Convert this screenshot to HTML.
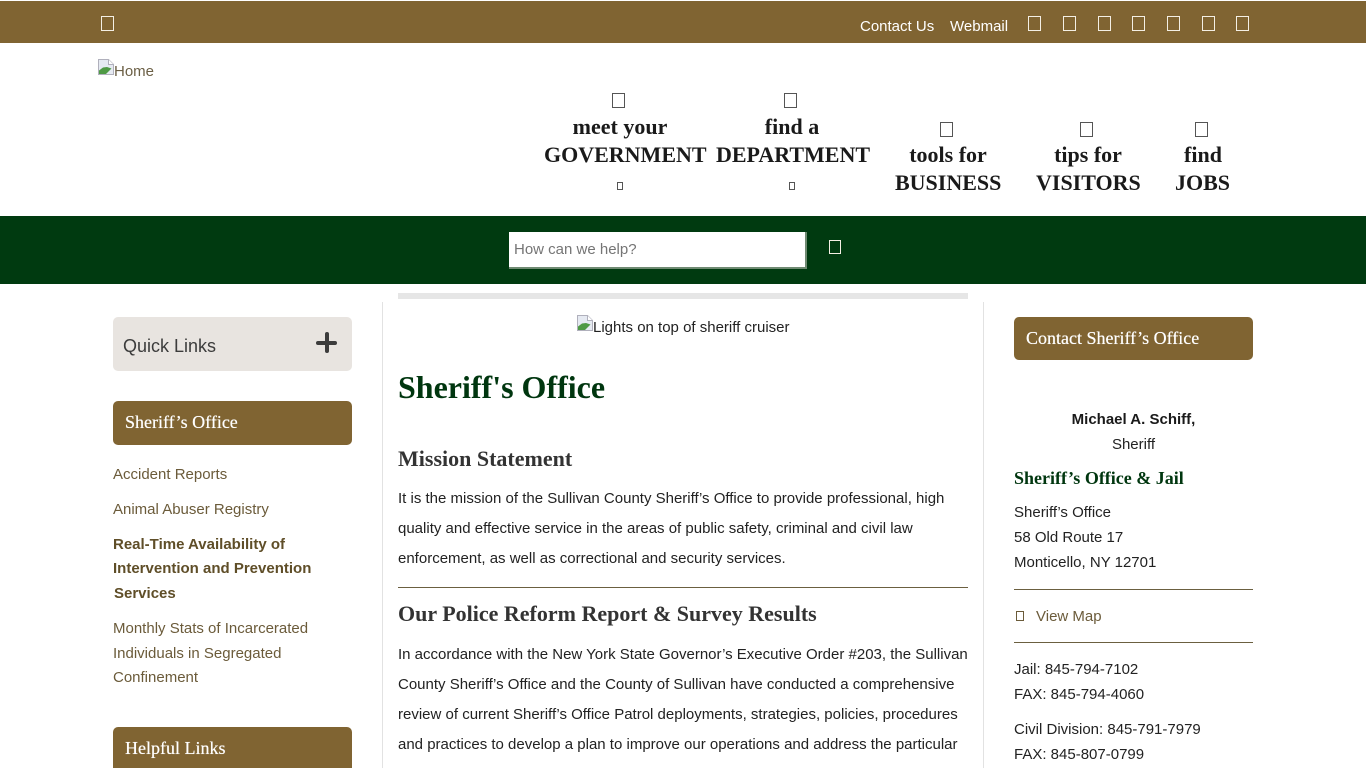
<!DOCTYPE html>
<html lang="en">
<head>
<meta charset="utf-8">
<title>Sheriff's Office</title>
<style>
html,body{margin:0;padding:0;width:1366px;height:768px;overflow:hidden;background:#fff;}
body{position:relative;font-family:"Liberation Sans",sans-serif;font-size:15px;color:#222;}
.t{position:absolute;white-space:nowrap;line-height:24px;height:24px;}
.a{position:absolute;}
.tofu{position:absolute;box-sizing:border-box;border:1px solid #f4efe4;width:13px;height:15px;}
.d{border-color:#555;}
.nav{font-family:"Liberation Serif",serif;font-weight:bold;font-size:22px;color:#1a1a1a;text-align:center;line-height:28px;height:28px;}
.bar{position:absolute;background:#806432;border-radius:5px;}
.bt{font-family:"Liberation Serif",serif;font-size:18px;color:#fff;text-shadow:0 0 .5px #fff;}
.l{color:#6b5b3a;}
.b{font-family:"Liberation Serif",serif;font-weight:bold;font-size:22px;color:#333;}
.hr{position:absolute;height:1px;background:#6b6040;}
</style>
</head>
<body>
<div class="a" style="left:0;top:1px;width:1366px;height:42px;background:#806432;"></div>
<div class="tofu" style="left:101px;top:16px;"></div>
<div class="t" style="left:860px;top:15px;color:#fff;font-size:15px;">Contact Us</div>
<div class="t" style="left:950px;top:15px;color:#fff;font-size:15px;">Webmail</div>
<div class="tofu" style="left:1028px;top:16px;"></div>
<div class="tofu" style="left:1063px;top:16px;"></div>
<div class="tofu" style="left:1098px;top:16px;"></div>
<div class="tofu" style="left:1132px;top:16px;"></div>
<div class="tofu" style="left:1167px;top:16px;"></div>
<div class="tofu" style="left:1202px;top:16px;"></div>
<div class="tofu" style="left:1236px;top:16px;"></div>

<svg class="a" style="left:98px;top:59px;" width="16" height="16" viewBox="0 0 16 16"><path d="M.5.5H10.500L15.500 5.500V15.500H.5Z" fill="#e6eaf2" stroke="#b0b0bc"/><path d="M1 15V11.500L5 8.500L9 8L13.500 9.500L8 15Z" fill="#4f9a45"/><path d="M10.500 .5V5.500H15.500" fill="#fff" stroke="#b0b0bc"/></svg>
<div class="t l" style="left:114px;top:60px;font-size:15px;color:#6b5f45;">Home</div>

<div class="tofu d" style="left:612px;top:93px;"></div>
<div class="tofu d" style="left:784px;top:93px;"></div>
<div class="tofu d" style="left:940px;top:122px;"></div>
<div class="tofu d" style="left:1080px;top:122px;"></div>
<div class="tofu d" style="left:1195px;top:122px;"></div>
<div class="tofu d" style="left:617px;top:182px;width:6px;height:8px;"></div>
<div class="tofu d" style="left:789px;top:182px;width:6px;height:8px;"></div>
<div class="t nav" style="left:540px;width:160px;top:113px;">meet your</div>
<div class="t nav" style="left:544px;top:141px;">GOVERNMENT</div>
<div class="t nav" style="left:712px;width:160px;top:113px;">find a</div>
<div class="t nav" style="left:716px;top:141px;">DEPARTMENT</div>
<div class="t nav" style="left:868px;width:160px;top:141px;">tools for</div>
<div class="t nav" style="left:895px;top:169px;">BUSINESS</div>
<div class="t nav" style="left:1008px;width:160px;top:141px;">tips for</div>
<div class="t nav" style="left:1036px;top:169px;">VISITORS</div>
<div class="t nav" style="left:1123px;width:160px;top:141px;">find</div>
<div class="t nav" style="left:1175px;top:169px;">JOBS</div>

<div class="a" style="left:0;top:216px;width:1366px;height:68px;background:#003a10;"></div>
<div class="a" style="left:509px;top:232px;width:298px;height:37px;box-sizing:border-box;background:#fff;border-right:2px solid #6f8a72;border-bottom:2px solid #6f8a72;"></div>
<div class="t" style="left:514px;top:238px;color:#757575;font-size:15px;">How can we help?</div>
<div class="tofu" style="left:829px;top:240px;width:12px;height:14px;"></div>

<div class="a" style="left:398px;top:293px;width:570px;height:6px;background:#e6e6e6;"></div>
<div class="a" style="left:382px;top:302px;width:1px;height:466px;background:#e2e2e2;"></div>
<div class="a" style="left:983px;top:302px;width:1px;height:466px;background:#e2e2e2;"></div>

<svg class="a" style="left:577px;top:315px;" width="16" height="16" viewBox="0 0 16 16"><path d="M.5.5H10.500L15.500 5.500V15.500H.5Z" fill="#e6eaf2" stroke="#b0b0bc"/><path d="M1 15V11.500L5 8.500L9 8L13.500 9.500L8 15Z" fill="#4f9a45"/><path d="M10.500 .5V5.500H15.500" fill="#fff" stroke="#b0b0bc"/></svg>
<div class="t" style="left:593px;top:316px;font-size:15px;color:#222;">Lights on top of sheriff cruiser</div>

<div class="a" style="left:113px;top:317px;width:239px;height:54px;background:#e8e4e0;border-radius:5px;"></div>
<div class="t" style="left:123px;top:334px;font-size:18px;color:#3c3c3c;">Quick Links</div>
<div class="a" style="left:316px;top:341px;width:21px;height:4px;background:#3c3c3c;border-radius:2px;"></div>
<div class="a" style="left:325px;top:332px;width:4px;height:21px;background:#3c3c3c;border-radius:2px;"></div>

<div class="bar" style="left:113px;top:401px;width:239px;height:44px;"></div>
<div class="t bt" style="left:125px;top:410px;">Sheriff’s Office</div>
<div class="t l" style="left:113px;top:463px;">Accident Reports</div>
<div class="t l" style="left:113px;top:498px;">Animal Abuser Registry</div>
<div class="t" style="left:113px;top:533px;font-weight:bold;color:#5f4e28;">Real-Time Availability of</div>
<div class="t" style="left:113px;top:557px;font-weight:bold;color:#5f4e28;">Intervention and Prevention</div>
<div class="t" style="left:114px;top:582px;font-weight:bold;color:#5f4e28;">Services</div>
<div class="t l" style="left:113px;top:617px;">Monthly Stats of Incarcerated</div>
<div class="t l" style="left:113px;top:642px;">Individuals in Segregated</div>
<div class="t l" style="left:113px;top:666px;">Confinement</div>
<div class="bar" style="left:113px;top:727px;width:239px;height:60px;"></div>
<div class="t bt" style="left:125px;top:736px;">Helpful Links</div>

<div class="t" style="left:398px;top:367px;height:40px;line-height:40px;font-family:'Liberation Serif',serif;font-weight:bold;font-size:32px;color:#00360f;">Sheriff's Office</div>
<div class="t b" style="left:398px;top:447px;">Mission Statement</div>
<div class="t" style="left:398px;top:487px;">It is the mission of the Sullivan County Sheriff’s Office to provide professional, high</div>
<div class="t" style="left:398px;top:517px;">quality and effective service in the areas of public safety, criminal and civil law</div>
<div class="t" style="left:398px;top:547px;">enforcement, as well as correctional and security services.</div>
<div class="hr" style="left:398px;top:587px;width:570px;"></div>
<div class="t b" style="left:398px;top:602px;">Our Police Reform Report &amp; Survey Results</div>
<div class="t" style="left:398px;top:643px;">In accordance with the New York State Governor’s Executive Order #203, the Sullivan</div>
<div class="t" style="left:398px;top:673px;">County Sheriff’s Office and the County of Sullivan have conducted a comprehensive</div>
<div class="t" style="left:398px;top:703px;">review of current Sheriff’s Office Patrol deployments, strategies, policies, procedures</div>
<div class="t" style="left:398px;top:733px;">and practices to develop a plan to improve our operations and address the particular</div>

<div class="bar" style="left:1014px;top:317px;width:239px;height:43px;"></div>
<div class="t bt" style="left:1026px;top:326px;">Contact Sheriff’s Office</div>
<div class="t" style="left:1014px;width:239px;text-align:center;top:408px;font-weight:bold;color:#1a1a1a;">Michael A. Schiff,</div>
<div class="t" style="left:1014px;width:239px;text-align:center;top:433px;color:#222;">Sheriff</div>
<div class="t" style="left:1014px;top:466px;font-family:'Liberation Serif',serif;font-weight:bold;font-size:18px;color:#00360f;">Sheriff’s Office &amp; Jail</div>
<div class="t" style="left:1014px;top:501px;">Sheriff’s Office</div>
<div class="t" style="left:1014px;top:526px;">58 Old Route 17</div>
<div class="t" style="left:1014px;top:551px;">Monticello, NY 12701</div>
<div class="hr" style="left:1014px;top:589px;width:239px;"></div>
<div class="tofu" style="left:1016px;top:611px;width:8px;height:10px;border-color:#6b5b3a;"></div>
<div class="t l" style="left:1036px;top:605px;">View Map</div>
<div class="hr" style="left:1014px;top:642px;width:239px;"></div>
<div class="t" style="left:1014px;top:658px;">Jail: 845-794-7102</div>
<div class="t" style="left:1014px;top:683px;">FAX: 845-794-4060</div>
<div class="t" style="left:1014px;top:718px;">Civil Division: 845-791-7979</div>
<div class="t" style="left:1014px;top:743px;">FAX: 845-807-0799</div>
</body>
</html>
